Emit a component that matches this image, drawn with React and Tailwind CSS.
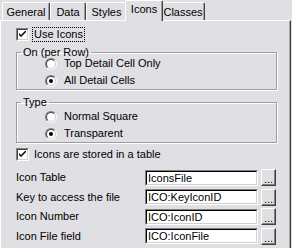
import React from 'react';

const tabs = [
  { label: 'General', w: 'w-[48px]' },
  { label: 'Data', w: 'w-[36px]' },
  { label: 'Styles', w: 'w-[41px]' },
  { label: 'Icons', w: 'w-[38px]', active: true },
  { label: 'Classes', w: 'w-[44px]' }
];

const fields = [
  { label: 'Icon Table', value: 'IconsFile' },
  { label: 'Key to access the file', value: 'ICO:KeyIconID' },
  { label: 'Icon Number', value: 'ICO:IconID' },
  { label: 'Icon File field', value: 'ICO:IconFile' }
];

function Tab({ label, w, active }) {
  if (active) {
    return (
      <div className={`${w} -mx-[2px] h-[21px] relative z-10 bg-[#e0dfe3] border-t border-l border-white border-r border-r-[#404040] shadow-[inset_-1px_0_0_#a0a0a0] rounded-t-[2px] flex justify-center pt-[2px]`}>
        {label}
      </div>
    );
  }
  return (
    <div className={`${w} mt-[2px] h-[18px] border-t border-l border-white border-r border-r-[#404040] shadow-[inset_-1px_0_0_#a0a0a0] rounded-t-[2px] flex justify-center pt-[3px]`}>
      {label}
    </div>
  );
}

function Checkbox({ label, focus }) {
  return (
    <div className="flex items-center h-[13px]">
      <div className="w-[13px] h-[13px] border border-t-[#808080] border-l-[#808080] border-b-white border-r-white">
        <div className="w-full h-full bg-white border border-t-[#404040] border-l-[#404040] border-b-[#d4d0c8] border-r-[#d4d0c8] flex items-center justify-center">
          <svg width="7" height="7" viewBox="0 0 7 7">
            <path d="M0 2 L0 4 L2 6 L7 1 L7 -1 L2 4 Z" fill="#000" />
          </svg>
        </div>
      </div>
      <span className={focus ? 'ml-[4px] px-[1px] leading-[13px] outline-1 outline-dotted outline-black' : 'ml-[5px] leading-[13px]'}>
        {label}
      </span>
    </div>
  );
}

function Radio({ label, checked }) {
  return (
    <div className="flex items-center h-[17px] pl-[28px]">
      <div className="w-[12px] h-[12px] rounded-full border border-t-[#808080] border-l-[#808080] border-b-white border-r-white">
        <div className="w-full h-full rounded-full bg-white border border-t-[#404040] border-l-[#404040] border-b-[#d4d0c8] border-r-[#d4d0c8] flex items-center justify-center">
          {checked && <div className="w-[4px] h-[4px] rounded-full bg-black" />}
        </div>
      </div>
      <span className="ml-[7px]">{label}</span>
    </div>
  );
}

function Group({ title, children, className }) {
  return (
    <fieldset className={`w-[261px] border border-[#9d9da1] shadow-[inset_1px_1px_0_#fff,1px_1px_0_#fff] ${className}`}>
      <legend className="ml-[4px] px-[2px] leading-[13px]">{title}</legend>
      {children}
    </fieldset>
  );
}

function FieldRow({ label, value }) {
  return (
    <div className="flex items-center h-[17px]">
      <span className="w-[129px]">{label}</span>
      <div className="w-[113px] h-[16px] border border-t-[#808080] border-l-[#808080] border-b-white border-r-white">
        <div className="w-full h-full bg-white border border-t-black border-l-black border-b-[#d4d0c8] border-r-[#d4d0c8] pl-[1px] leading-[12px]">
          {value}
        </div>
      </div>
      <div className="ml-[3px] w-[15px] h-[17px] bg-[#e0dfe3] border border-t-white border-l-white border-b-[#404040] border-r-[#404040] shadow-[inset_-1px_-1px_0_#808080] flex items-end justify-center pb-[1px] leading-[10px]">
        ...
      </div>
    </div>
  );
}

export default function App() {
  return (
    <div className="w-[292px] h-[248px] overflow-hidden bg-[#e0dfe3] text-black text-[11px] leading-[13px] [font-family:'Liberation_Sans',Arial,sans-serif]">
      <div className="flex items-start h-[20px] pl-[2px]">
        {tabs.map(t => (
          <Tab key={t.label} {...t} />
        ))}
      </div>
      <div className="w-[291px] h-[228px] border-t border-l border-white border-r border-r-[#404040] shadow-[inset_-1px_0_0_#a0a0a0] pl-[15px] pt-[7px]">
        <Checkbox label="Use Icons" focus />

        <Group title="On (per Row)" className="mt-[5px]">
          <div className="-mt-[4px]">
            <Radio label="Top Detail Cell Only" />
            <Radio label="All Detail Cells" checked />
          </div>
        </Group>

        <Group title="Type" className="mt-[6px]">
          <div className="-mt-[1px]">
            <Radio label="Normal Square" />
            <Radio label="Transparent" checked />
          </div>
        </Group>

        <div className="mt-[5px]">
          <Checkbox label="Icons are stored in a table" />
        </div>

        <div className="mt-[8px] flex flex-col gap-[2.5px]">
          {fields.map(f => (
            <FieldRow key={f.label} {...f} />
          ))}
        </div>
      </div>
    </div>
  );
}
